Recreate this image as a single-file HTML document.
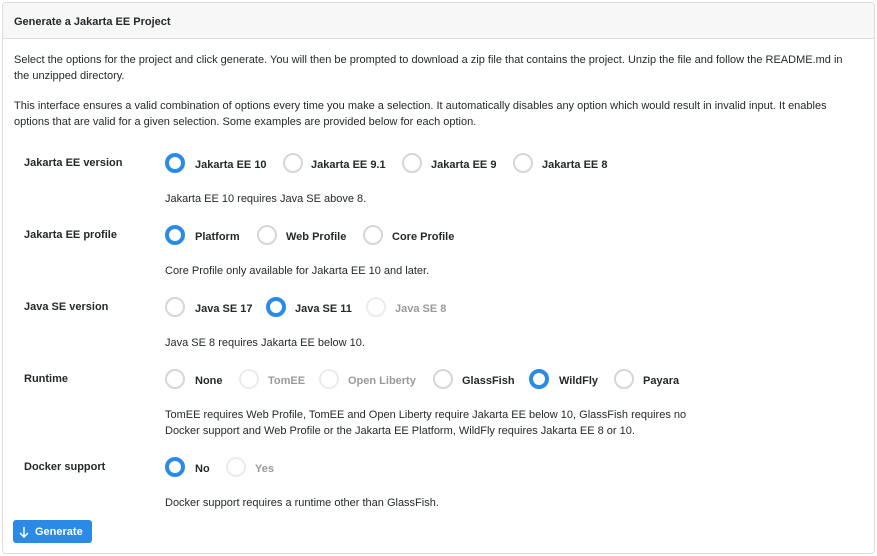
<!DOCTYPE html>
<html><head><meta charset="utf-8"><style>
body{margin:0;width:877px;height:556px;background:#fff;font-family:"Liberation Sans",Helvetica,Arial,sans-serif;color:#24292e;position:relative;overflow:hidden}
.card{position:absolute;left:2px;top:2px;width:871px;height:550px;border:1px solid #dcdcdc;border-radius:4px}
.hdr{position:absolute;left:0;top:0;right:0;height:35px;background:#f7f7f7;border-bottom:1px solid #dcdcdc;border-radius:4px 4px 0 0}
.t{position:absolute;font-size:11px;white-space:nowrap;line-height:16px;margin-top:2px}
.b{font-weight:bold}
.r{position:absolute;width:16px;height:16px;border:2px solid #d6d6d6;border-radius:50%;background:#fff}
.r.c{width:12px;height:12px;border:4px solid #2a8be6}
.d{color:#9a9a9a}
.btn{position:absolute;left:13px;top:520px;width:79px;height:23px;background:#2b8ae6;border-radius:3px;color:#fff;font-size:11px;line-height:23px}
</style></head><body>
<div class="card"><div class="hdr"></div></div>
<div class="t b" style="left:14px;top:12px">Generate a Jakarta EE Project</div>
<div class="t" style="left:14px;top:50px;line-height:16px">Select the options for the project and click generate. You will then be prompted to download a zip file that contains the project. Unzip the file and follow the README.md in<br>the unzipped directory.</div>
<div class="t" style="left:14px;top:96px">This interface ensures a valid combination of options every time you make a selection. It automatically disables any option which would result in invalid input. It enables<br>options that are valid for a given selection. Some examples are provided below for each option.</div>

<div class="t b" style="left:24px;top:153px">Jakarta EE version</div>
<div class="r c" style="left:165px;top:153px"></div><div class="t b" style="left:195px;top:155px">Jakarta EE 10</div>
<div class="r" style="left:283px;top:153px"></div><div class="t b" style="left:311px;top:155px">Jakarta EE 9.1</div>
<div class="r" style="left:402px;top:153px"></div><div class="t b" style="left:431px;top:155px">Jakarta EE 9</div>
<div class="r" style="left:513px;top:153px"></div><div class="t b" style="left:542px;top:155px">Jakarta EE 8</div>
<div class="t" style="left:165px;top:189px">Jakarta EE 10 requires Java SE above 8.</div>

<div class="t b" style="left:24px;top:225px">Jakarta EE profile</div>
<div class="r c" style="left:165px;top:225px"></div><div class="t b" style="left:195px;top:227px">Platform</div>
<div class="r" style="left:257px;top:225px"></div><div class="t b" style="left:286px;top:227px">Web Profile</div>
<div class="r" style="left:363px;top:225px"></div><div class="t b" style="left:392px;top:227px">Core Profile</div>
<div class="t" style="left:165px;top:261px">Core Profile only available for Jakarta EE 10 and later.</div>

<div class="t b" style="left:24px;top:297px">Java SE version</div>
<div class="r" style="left:165px;top:297px"></div><div class="t b" style="left:195px;top:299px">Java SE 17</div>
<div class="r c" style="left:266px;top:297px"></div><div class="t b" style="left:295px;top:299px">Java SE 11</div>
<div class="r" style="left:366px;top:297px;border-color:#ececec"></div><div class="t b d" style="left:395px;top:299px">Java SE 8</div>
<div class="t" style="left:165px;top:333px">Java SE 8 requires Jakarta EE below 10.</div>

<div class="t b" style="left:24px;top:369px">Runtime</div>
<div class="r" style="left:165px;top:369px"></div><div class="t b" style="left:195px;top:371px">None</div>
<div class="r" style="left:239px;top:369px;border-color:#ececec"></div><div class="t b d" style="left:268px;top:371px">TomEE</div>
<div class="r" style="left:319px;top:369px;border-color:#ececec"></div><div class="t b d" style="left:348px;top:371px">Open Liberty</div>
<div class="r" style="left:433px;top:369px"></div><div class="t b" style="left:462px;top:371px">GlassFish</div>
<div class="r c" style="left:529px;top:369px"></div><div class="t b" style="left:559px;top:371px">WildFly</div>
<div class="r" style="left:614px;top:369px"></div><div class="t b" style="left:643px;top:371px">Payara</div>
<div class="t" style="left:165px;top:405px">TomEE requires Web Profile, TomEE and Open Liberty require Jakarta EE below 10, GlassFish requires no<br>Docker support and Web Profile or the Jakarta EE Platform, WildFly requires Jakarta EE 8 or 10.</div>

<div class="t b" style="left:24px;top:457px">Docker support</div>
<div class="r c" style="left:165px;top:457px"></div><div class="t b" style="left:195px;top:459px">No</div>
<div class="r" style="left:226px;top:457px;border-color:#ececec"></div><div class="t b d" style="left:255px;top:459px">Yes</div>
<div class="t" style="left:165px;top:493px">Docker support requires a runtime other than GlassFish.</div>

<div class="btn"><svg style="position:absolute;left:6px;top:6px" width="10" height="12" viewBox="0 0 10 12"><path d="M5 1V11M1 7L5 11L9 7" stroke="#fff" stroke-width="1.5" fill="none"/></svg><span style="position:absolute;left:22px;top:1px;font-weight:bold">Generate</span></div>
</body></html>
